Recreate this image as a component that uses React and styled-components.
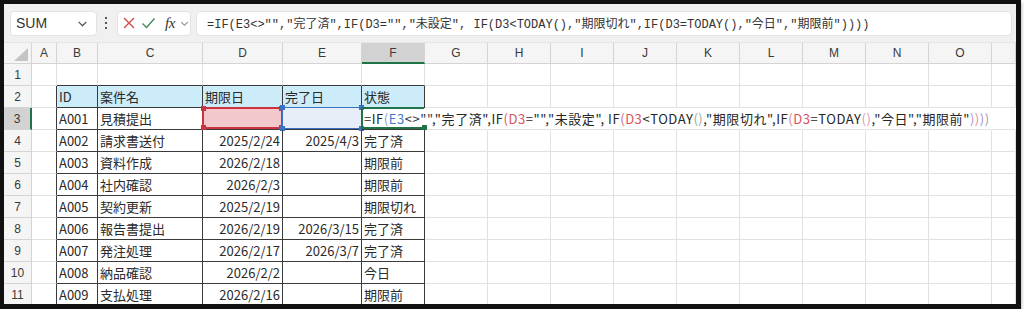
import React from "react";
import styled, { createGlobalStyle } from "styled-components";

const GlobalStyle = createGlobalStyle`
  html, body {
    margin: 0;
    padding: 0;
    background: #ffffff;
  }
  body {
    font-family: "Noto Sans CJK JP", "Liberation Sans", sans-serif;
  }
`;

const COLS = ["A", "B", "C", "D", "E", "F", "G", "H", "I", "J", "K", "L", "M", "N", "O", ""];
const GRID = "#e1e1e1";
const DARK = "#3a3a3a";
const GREEN = "#1f7346";

const FORMULA =
  '=IF(E3<>"","完了済",IF(D3="","未設定", IF(D3<TODAY(),"期限切れ",IF(D3=TODAY(),"今日","期限前"))))';

const tokens = [
  ["=IF", "#262626"],
  ["(", "#7f9fcf"],
  ["E3", "#3f7bd2"],
  ['<>""', "#30354a"],
  [',"完了済",IF', "#262626"],
  ["(", "#d8545e"],
  ["D3", "#d8545e"],
  ['="","未設定", IF', "#262626"],
  ["(", "#d0687f"],
  ["D3", "#d8545e"],
  ["<TODAY", "#262626"],
  ["()", "#9aa79f"],
  [',"期限切れ",IF', "#262626"],
  ["(", "#e07d86"],
  ["D3", "#d8545e"],
  ["=TODAY", "#262626"],
  ["()", "#d59ab4"],
  [',"今日","期限前"', "#262626"],
  [")", "#bf8ad0"],
  [")", "#e58ca0"],
  [")", "#a68bd6"],
  [")", "#8f9bb0"],
];

const rows = [
  ["ID", "案件名", "期限日", "完了日", "状態"],
  ["A001", "見積提出", "", "", null],
  ["A002", "請求書送付", "2025/2/24", "2025/4/3", "完了済"],
  ["A003", "資料作成", "2026/2/18", "", "期限前"],
  ["A004", "社内確認", "2026/2/3", "", "期限前"],
  ["A005", "契約更新", "2025/2/19", "", "期限切れ"],
  ["A006", "報告書提出", "2026/2/19", "2026/3/15", "完了済"],
  ["A007", "発注処理", "2026/2/17", "2026/3/7", "完了済"],
  ["A008", "納品確認", "2026/2/2", "", "今日"],
  ["A009", "支払処理", "2026/2/16", "", "期限前"],
];

const Frame = styled.div`
  width: 1021px;
  height: 309px;
  box-sizing: border-box;
  border: 4px solid #111;
  border-right-width: 5px;
  border-bottom-width: 5px;
  box-shadow: 1px 2px 3px rgba(0, 0, 0, 0.25);
  display: flex;
  flex-direction: column;
  overflow: hidden;
  background: #fff;
`;

const Toolbar = styled.div`
  height: 39px;
  flex: none;
  display: flex;
  align-items: center;
  padding: 0 4px 0 6px;
  background: #f0f0f0;
  border-bottom: 1px solid #e2e6eb;
  box-sizing: border-box;
`;

const NameBox = styled.div`
  width: 87px;
  height: 25px;
  box-sizing: border-box;
  background: #fff;
  border: 1px solid #e3e3e3;
  border-radius: 4px;
  display: flex;
  align-items: center;
  justify-content: space-between;
  padding: 0 8px 0 5px;
  font: 14px "Liberation Sans", sans-serif;
  color: #333;
`;

const Dots = styled.div`
  width: 3px;
  margin: 0 9px 0 8px;
  display: flex;
  flex-direction: column;
  gap: 3px;
  span {
    width: 2px;
    height: 2px;
    background: #555;
  }
`;

const FxGroup = styled.div`
  width: 74px;
  height: 25px;
  box-sizing: border-box;
  background: #fff;
  border: 1px solid #e3e3e3;
  border-radius: 4px;
  display: flex;
  align-items: center;
  gap: 5px;
  padding-left: 4px;
`;

const FxText = styled.span`
  font: italic 15px "Liberation Serif", serif;
  color: #333;
  margin-left: 4px;
  letter-spacing: -0.5px;
`;

const FormulaBar = styled.div`
  flex: 1;
  height: 25px;
  margin-left: 5px;
  box-sizing: border-box;
  background: #fff;
  border: 1px solid #e3e3e3;
  border-radius: 4px;
  display: flex;
  align-items: center;
  padding-left: 10px;
  font: 12px "Liberation Mono", "Noto Sans CJK JP", monospace;
  color: #333;
  white-space: pre;
  overflow: hidden;
`;

const Sheet = styled.div`
  flex: 1;
  display: grid;
  grid-template-columns: 28px 25px 41px 105px 80px 79px repeat(10, 63px) 1fr;
  grid-template-rows: 21px repeat(11, 22px);
  overflow: hidden;
`;

const Corner = styled.div`
  background: #f5f5f5;
  border-right: 1px solid #d4d4d4;
  border-bottom: 1px solid #d4d4d4;
  box-sizing: border-box;
  display: flex;
  align-items: flex-end;
  justify-content: flex-end;
  padding: 0 3px 2px 0;
`;

const ColHead = styled.div`
  box-sizing: border-box;
  background: ${(p) => (p.$active ? "#d2d2d2" : "#f5f5f5")};
  border-right: 1px solid #d4d4d4;
  border-bottom: ${(p) => (p.$active ? `2px solid ${GREEN}` : "1px solid #d4d4d4")};
  display: flex;
  align-items: center;
  justify-content: center;
  font: 12px "Liberation Sans", sans-serif;
  color: #3a3a3a;
`;

const RowHead = styled.div`
  box-sizing: border-box;
  background: ${(p) => (p.$active ? "#d2d2d2" : "#f5f5f5")};
  border-right: ${(p) => (p.$active ? `2px solid ${GREEN}` : "1px solid #d4d4d4")};
  border-bottom: 1px solid #d4d4d4;
  display: flex;
  align-items: center;
  justify-content: center;
  font: 12px "Liberation Sans", sans-serif;
  color: #3a3a3a;
`;

const Cell = styled.div`
  position: relative;
  box-sizing: border-box;
  background: ${(p) => p.$bg || "transparent"};
  border-right: 1px solid ${(p) => p.$right};
  border-bottom: 1px solid ${(p) => p.$bottom};
  padding: 0 2px;
  font-size: 13px;
  line-height: 21px;
  color: #2a2a2a;
  text-align: ${(p) => (p.$num ? "right" : "left")};
  white-space: nowrap;
  z-index: ${(p) => (p.$front ? 3 : "auto")};
`;

const RefBox = styled.div`
  position: absolute;
  inset: -1px -1px 0 -1px;
  border: ${(p) => p.$w || 1}px solid ${(p) => p.$color};
  ${(p) => (p.$open ? "border-right: none; right: 0;" : "")}
  pointer-events: none;
`;

const Handle = styled.i`
  position: absolute;
  width: 5px;
  height: 5px;
  background: ${(p) => p.$color};
  ${(p) => (p.$top ? "top: -3px;" : "bottom: -3px;")}
  ${(p) => (p.$left ? "left: -3px;" : "right: -3px;")}
`;

const FormulaText = styled.span`
  font-family: "Noto Sans CJK JP", "Liberation Sans", sans-serif;
  font-size: 13px;
  letter-spacing: 0.55px;
`;

const Chevron = ({ size = 10, color = "#666" }) => (
  <svg width={size} height={size} viewBox="0 0 10 10">
    <path d="M1.5 3.5 L5 7 L8.5 3.5" fill="none" stroke={color} strokeWidth="1.2" />
  </svg>
);

const Corners = ({ color }) => (
  <>
    <Handle $color={color} $top $left />
    <Handle $color={color} $top />
    <Handle $color={color} $left />
    <Handle $color={color} />
  </>
);

const inTable = (r, c) => r >= 2 && r <= 11 && c >= 2 && c <= 6;

function renderCell(r, c) {
  const right = inTable(r, c) || inTable(r, c + 1) ? DARK : r === 3 && c >= 7 ? "transparent" : GRID;
  const bottom = inTable(r, c) || inTable(r + 1, c) ? DARK : GRID;
  const data = inTable(r, c) ? rows[r - 2][c - 2] : "";
  const num = c === 4 || c === 5;
  let bg;
  let overlay = null;
  let content = data;

  if (r === 2 && inTable(r, c)) bg = "#ccecf9";
  if (r === 3 && c === 4) {
    bg = "#f3c8cc";
    overlay = (
      <RefBox $color="#cc3340" $w={2}>
        <Corners color="#cc3340" />
      </RefBox>
    );
  }
  if (r === 3 && c === 5) {
    bg = "#e8eef7";
    overlay = (
      <RefBox $color="#3a72c6" $w={1}>
        <Corners color="#3a72c6" />
      </RefBox>
    );
  }
  if (r === 3 && c === 6) {
    content = (
      <FormulaText>
        {tokens.map(([t, col], i) => (
          <span key={i} style={{ color: col }}>
            {t}
          </span>
        ))}
      </FormulaText>
    );
    overlay = (
      <RefBox $color={GREEN} $w={2} $open>
        <Handle $color={GREEN} />
      </RefBox>
    );
  }

  return (
    <Cell
      key={`${r}-${c}`}
      $right={r === 3 && c === 6 ? "transparent" : right}
      $bottom={bottom}
      $bg={bg}
      $num={num && r > 2}
      $front={r === 3 && c === 6}
    >
      {content}
      {overlay}
    </Cell>
  );
}

export default function App() {
  const body = [];
  for (let r = 1; r <= 11; r++) {
    body.push(
      <RowHead key={`rh${r}`} $active={r === 3}>
        {r}
      </RowHead>
    );
    for (let c = 1; c <= COLS.length; c++) body.push(renderCell(r, c));
  }

  return (
    <>
      <GlobalStyle />
      <Frame>
        <Toolbar>
          <NameBox>
            SUM
            <Chevron size={11} color="#555" />
          </NameBox>
          <Dots>
            <span />
            <span />
            <span />
          </Dots>
          <FxGroup>
            <svg width="14" height="14" viewBox="0 0 14 14">
              <path d="M2 2 L12 12 M12 2 L2 12" stroke="#d5474d" strokeWidth="1.4" fill="none" />
            </svg>
            <svg width="15" height="14" viewBox="0 0 15 14">
              <path d="M1.5 7.5 L5.5 11.5 L13.5 2.5" stroke="#3f8b5e" strokeWidth="1.4" fill="none" />
            </svg>
            <FxText>fx</FxText>
            <Chevron size={9} color="#888" />
          </FxGroup>
          <FormulaBar>{FORMULA}</FormulaBar>
        </Toolbar>
        <Sheet>
          <Corner>
            <svg width="14" height="13" viewBox="0 0 14 13">
              <path d="M14 0 L14 13 L0 13 Z" fill="#c4c4c4" />
            </svg>
          </Corner>
          {COLS.map((l, i) => (
            <ColHead key={`ch${i}`} $active={l === "F"}>
              {l}
            </ColHead>
          ))}
          {body}
        </Sheet>
      </Frame>
    </>
  );
}
